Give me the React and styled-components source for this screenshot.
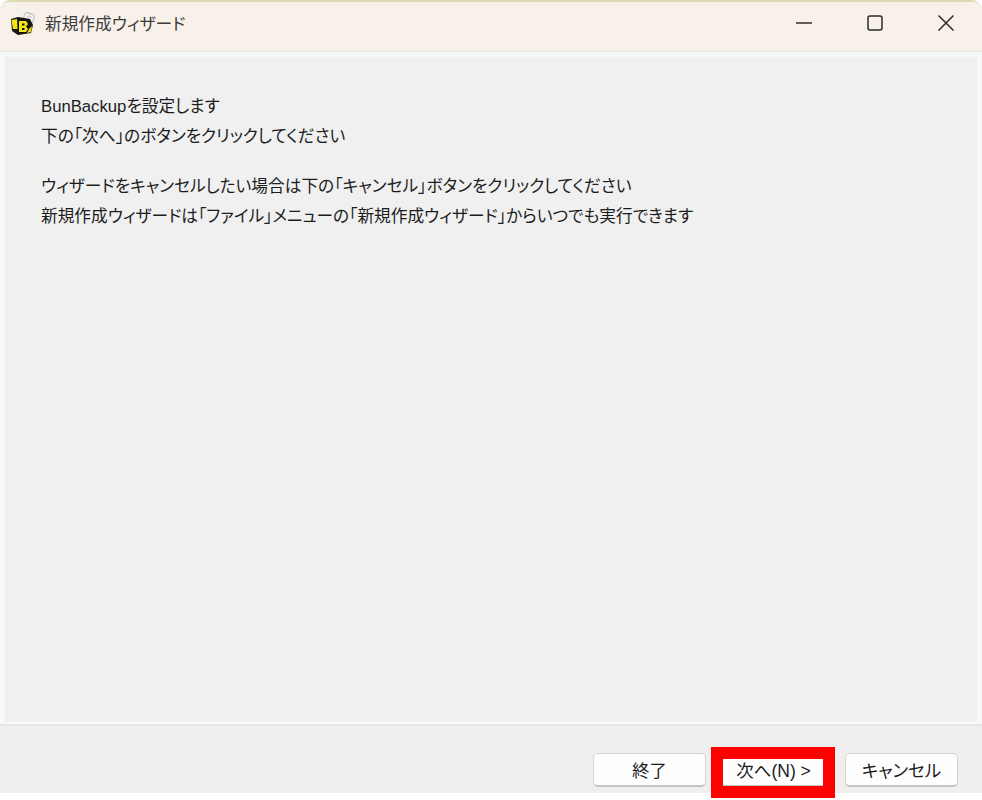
import React from 'react';
import styled, { createGlobalStyle } from 'styled-components';

const GlobalStyle = createGlobalStyle`
  html, body {
    margin: 0;
    padding: 0;
    background: #fff;
  }
  body {
    height: 800px;
    overflow: hidden;
    font-family: "Liberation Sans", "Noto Sans CJK JP", sans-serif;
    font-feature-settings: "palt";
    color: #1c1c1c;
  }
`;

const AppIcon = () => (
  <svg width="26" height="26" viewBox="0 0 26 26">
    <path d="M15 9 C14 3 19 1 21 4 C24 3 26 6 25 9 L23 13" fill="#f6f3ef" stroke="#c8c8c8" strokeWidth="1.4" />
    <path d="M18 9 C18 6 21 5 22 8" fill="none" stroke="#c8c8c8" strokeWidth="1.2" />
    <path d="M2 9 L9 7 L21 9 L24 15 L22 23 L9 25 L3 21 Z" fill="#17160e" />
    <path d="M2.5 10 L8 9 L8.5 19 L4 19 Z" fill="#f2e61a" />
    <path d="M20 19 L23 16 L22 22 L18 23 Z" fill="#e8da16" />
    <path d="M10 11 H17 L19 14 L17 16.5 L19 19 L17 22 H10 Z M13 13.5 V15.5 H15.5 V13.5 Z M13 18 V20 H15.5 V18 Z" fill="#f2e61a" fillRule="evenodd" />
  </svg>
);

const MinimizeIcon = () => (
  <svg width="16" height="16" viewBox="0 0 16 16">
    <path d="M0 8 H16" stroke="#2b2b2b" strokeWidth="1.5" fill="none" />
  </svg>
);

const MaximizeIcon = () => (
  <svg width="16" height="16" viewBox="0 0 16 16">
    <rect x="1" y="1" width="14" height="14" rx="2" stroke="#2b2b2b" strokeWidth="1.5" fill="none" />
  </svg>
);

const CloseIcon = () => (
  <svg width="16" height="16" viewBox="0 0 16 16">
    <path d="M0.5 0.5 L15.5 15.5 M15.5 0.5 L0.5 15.5" stroke="#2b2b2b" strokeWidth="1.5" fill="none" />
  </svg>
);

const App = () => (
  <>
    <GlobalStyle />
    <Page>
      <Window>
        <TitleBar>
          <TitleLeft>
            <AppIcon />
            <Title>新規作成ウィザード</Title>
          </TitleLeft>
          <Controls>
            <ControlButton><MinimizeIcon /></ControlButton>
            <ControlButton><MaximizeIcon /></ControlButton>
            <ControlButton><CloseIcon /></ControlButton>
          </Controls>
        </TitleBar>
        <Panel>
          <Paragraph>
            <Line>BunBackupを設定します</Line>
            <Line>下の「次へ」のボタンをクリックしてください</Line>
          </Paragraph>
          <Paragraph>
            <Line>ウィザードをキャンセルしたい場合は下の「キャンセル」ボタンをクリックしてください</Line>
            <Line>新規作成ウィザードは「ファイル」メニューの「新規作成ウィザード」からいつでも実行できます</Line>
          </Paragraph>
        </Panel>
        <Footer>
          <Button>終了</Button>
          <NextButton>次へ(N) &gt;</NextButton>
          <Button>キャンセル</Button>
        </Footer>
      </Window>
    </Page>
  </>
);

const Page = styled.div`
  width: 982px;
  height: 800px;
  background: #fff;
`;

const Window = styled.div`
  height: 793px;
  box-sizing: border-box;
  background: #efefef;
  border-top: 2px solid #dcdcb4;
  border-radius: 10px 10px 0 0;
  display: flex;
  flex-direction: column;
`;

const TitleBar = styled.div`
  height: 50px;
  flex: none;
  box-sizing: border-box;
  padding-bottom: 7px;
  display: flex;
  align-items: center;
  justify-content: space-between;
  background: #f8f1ea;
  border-radius: 8px 8px 0 0;
  border-bottom: 2px solid #ebebe8;
`;

const TitleLeft = styled.div`
  display: flex;
  align-items: center;
  gap: 10px;
  padding-left: 9px;
`;

const Title = styled.span`
  font-size: 16.7px;
  color: #3c3c3c;
`;

const Controls = styled.div`
  display: flex;
  align-items: center;
  gap: 55px;
  padding-right: 28px;
`;

const ControlButton = styled.div`
  width: 16px;
  height: 16px;
  display: flex;
`;

const Panel = styled.div`
  height: 672px;
  flex: none;
  box-sizing: border-box;
  padding: 35px 36px 0 36px;
  background: #f0f0f0;
  border-left: 5px solid #f9f9f9;
  border-right: 5px solid #f9f9f9;
  border-top: 5px solid #f6f6f6;
  border-bottom: 2px solid #fafafa;
  display: flex;
  flex-direction: column;
  gap: 20px;
`;

const Paragraph = styled.div`
  display: flex;
  flex-direction: column;
`;

const Line = styled.div`
  font-size: 16.7px;
  line-height: 30px;
  white-space: nowrap;
  color: #1c1c1c;
`;

const Footer = styled.div`
  flex: 1;
  display: flex;
  justify-content: flex-end;
  gap: 11px;
  padding: 27px 24px 0 0;
  border-top: 2px solid #e6e6e6;
  box-sizing: border-box;
`;

const Button = styled.button`
  width: 113px;
  height: 34px;
  box-sizing: border-box;
  padding: 0;
  background: #fefefe;
  border: 1px solid #d4d4d4;
  border-bottom: 2px solid #c4c4c4;
  border-radius: 5px;
  font-family: inherit;
  font-feature-settings: "palt";
  font-size: 17.5px;
  color: #1c1c1c;
`;

const NextButton = styled(Button)`
  position: relative;
  margin-right: 4px;
  &::after {
    content: "";
    position: absolute;
    top: -7px;
    left: -7px;
    right: -6px;
    bottom: -13px;
    border: 12px solid #ff0000;
  }
`;

export default App;
